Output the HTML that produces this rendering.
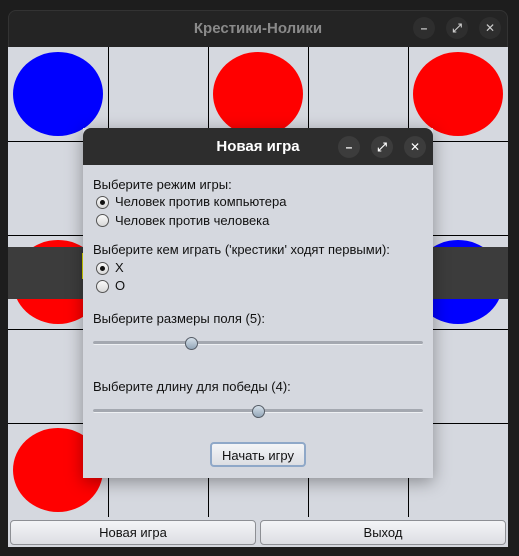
<!DOCTYPE html>
<html><head><meta charset="utf-8"><style>
*{box-sizing:border-box;margin:0;padding:0}
body{width:519px;height:556px;background:#1d1d1d;position:relative;overflow:hidden;font-family:"Liberation Sans","DejaVu Sans",sans-serif;font-size:13px;color:#111}
.abs{position:absolute}
.win{left:8px;top:10px;width:500px;height:537px;background:#242424;border-radius:8px 8px 0 0;border:1px solid #333}
.title{left:8px;top:10px;width:500px;height:37px;text-align:center;line-height:37px;color:#8a8a8a;font-weight:bold;font-size:15px}
.tb{width:22px;height:22px;border-radius:50%;background:#2e2e2e;color:#ccc;text-align:center;line-height:22px;font-size:12px;font-weight:bold}
.grid{left:8px;top:47px;width:500px;height:470px;background:#d5d8df}
.v{width:1px;background:#000;top:47px;height:470px}
.h{height:1px;background:#000;left:8px;width:500px}
.c{border-radius:50%;width:90px;height:84px}
.btn{border:1px solid #8d8f94;border-radius:4px;background:linear-gradient(#f4f5f7,#dcdee3);text-align:center;line-height:24px}
.dlg{left:83px;top:128px;width:350px;height:350px;background:#d5d8df;box-shadow:0 4px 16px rgba(0,0,0,.35)}
.dtitle{left:83px;top:128px;width:350px;height:37px;background:#2d2d2d;border-radius:8px 8px 0 0;color:#fff;font-weight:bold;font-size:15px;text-align:center;line-height:37px}
.dt{width:22px;height:22px;border-radius:50%;background:#3c3c3c;color:#fff;text-align:center;line-height:22px;font-size:12px;font-weight:bold}
.r{width:13px;height:13px;border-radius:50%;border:1px solid #555;background:linear-gradient(#fafafa,#d8d8d8)}
.r.on::after{content:"";position:absolute;left:3px;top:3px;width:5px;height:5px;border-radius:50%;background:#111}
.lab{white-space:nowrap;line-height:16px}
.track{height:4px;border-radius:2px;background:#a4a8b0;border-bottom:1px solid #eef0f3;left:93px;width:330px}
.knob{width:13px;height:13px;border-radius:50%;border:1px solid #555c66;background:linear-gradient(#d5e0ea,#93a6b8)}
</style></head><body>
<div class="abs win"></div>
<div class="abs title">Крестики-Нолики</div>
<div class="abs tb" style="left:413px;top:17px">–</div>
<div class="abs tb" style="left:446px;top:17px">⤢</div>
<div class="abs tb" style="left:479px;top:17px">✕</div>
<div class="abs grid"></div>
<div class="abs v" style="left:108px"></div>
<div class="abs v" style="left:208px"></div>
<div class="abs v" style="left:308px"></div>
<div class="abs v" style="left:408px"></div>
<div class="abs h" style="top:141px"></div>
<div class="abs h" style="top:235px"></div>
<div class="abs h" style="top:329px"></div>
<div class="abs h" style="top:423px"></div>
<div class="abs c" style="left:13px;top:52px;background:#00f"></div>
<div class="abs c" style="left:213px;top:52px;background:#f00"></div>
<div class="abs c" style="left:413px;top:52px;background:#f00"></div>
<div class="abs c" style="left:13px;top:240px;background:#f00"></div>
<div class="abs c" style="left:413px;top:240px;background:#00f"></div>
<div class="abs c" style="left:13px;top:428px;background:#f00"></div>
<div class="abs" style="left:8px;top:247px;width:500px;height:52px;background:#3c3c3c"></div>
<div class="abs" style="left:82px;top:253px;width:2px;height:26px;background:#dd0"></div>
<div class="abs" style="left:8px;top:517px;width:500px;height:30px;background:#d5d8df"></div>
<div class="abs btn" style="left:10px;top:520px;width:246px;height:25px">Новая игра</div>
<div class="abs btn" style="left:260px;top:520px;width:246px;height:25px">Выход</div>

<div class="abs dlg"></div>
<div class="abs dtitle">Новая игра</div>
<div class="abs dt" style="left:338px;top:136px">–</div>
<div class="abs dt" style="left:371px;top:136px">⤢</div>
<div class="abs dt" style="left:404px;top:136px">✕</div>
<div class="abs lab" style="left:93px;top:177px">Выберите режим игры:</div>
<div class="abs r on" style="left:96px;top:196px"></div><div class="abs lab" style="left:115px;top:194px">Человек против компьютера</div>
<div class="abs r" style="left:96px;top:214px"></div><div class="abs lab" style="left:115px;top:213px">Человек против человека</div>
<div class="abs lab" style="left:93px;top:242px">Выберите кем играть ('крестики' ходят первыми):</div>
<div class="abs r on" style="left:96px;top:262px"></div><div class="abs lab" style="left:115px;top:260px">X</div>
<div class="abs r" style="left:96px;top:280px"></div><div class="abs lab" style="left:115px;top:278px">O</div>
<div class="abs lab" style="left:93px;top:311px">Выберите размеры поля (5):</div>
<div class="abs track" style="top:341px"></div>
<div class="abs knob" style="left:185px;top:337px"></div>
<div class="abs lab" style="left:93px;top:379px">Выберите длину для победы (4):</div>
<div class="abs track" style="top:409px"></div>
<div class="abs knob" style="left:252px;top:405px"></div>
<div class="abs btn" style="left:210px;top:442px;width:96px;height:25px;border:2px solid #8fa8c8">Начать игру</div>
</body></html>
